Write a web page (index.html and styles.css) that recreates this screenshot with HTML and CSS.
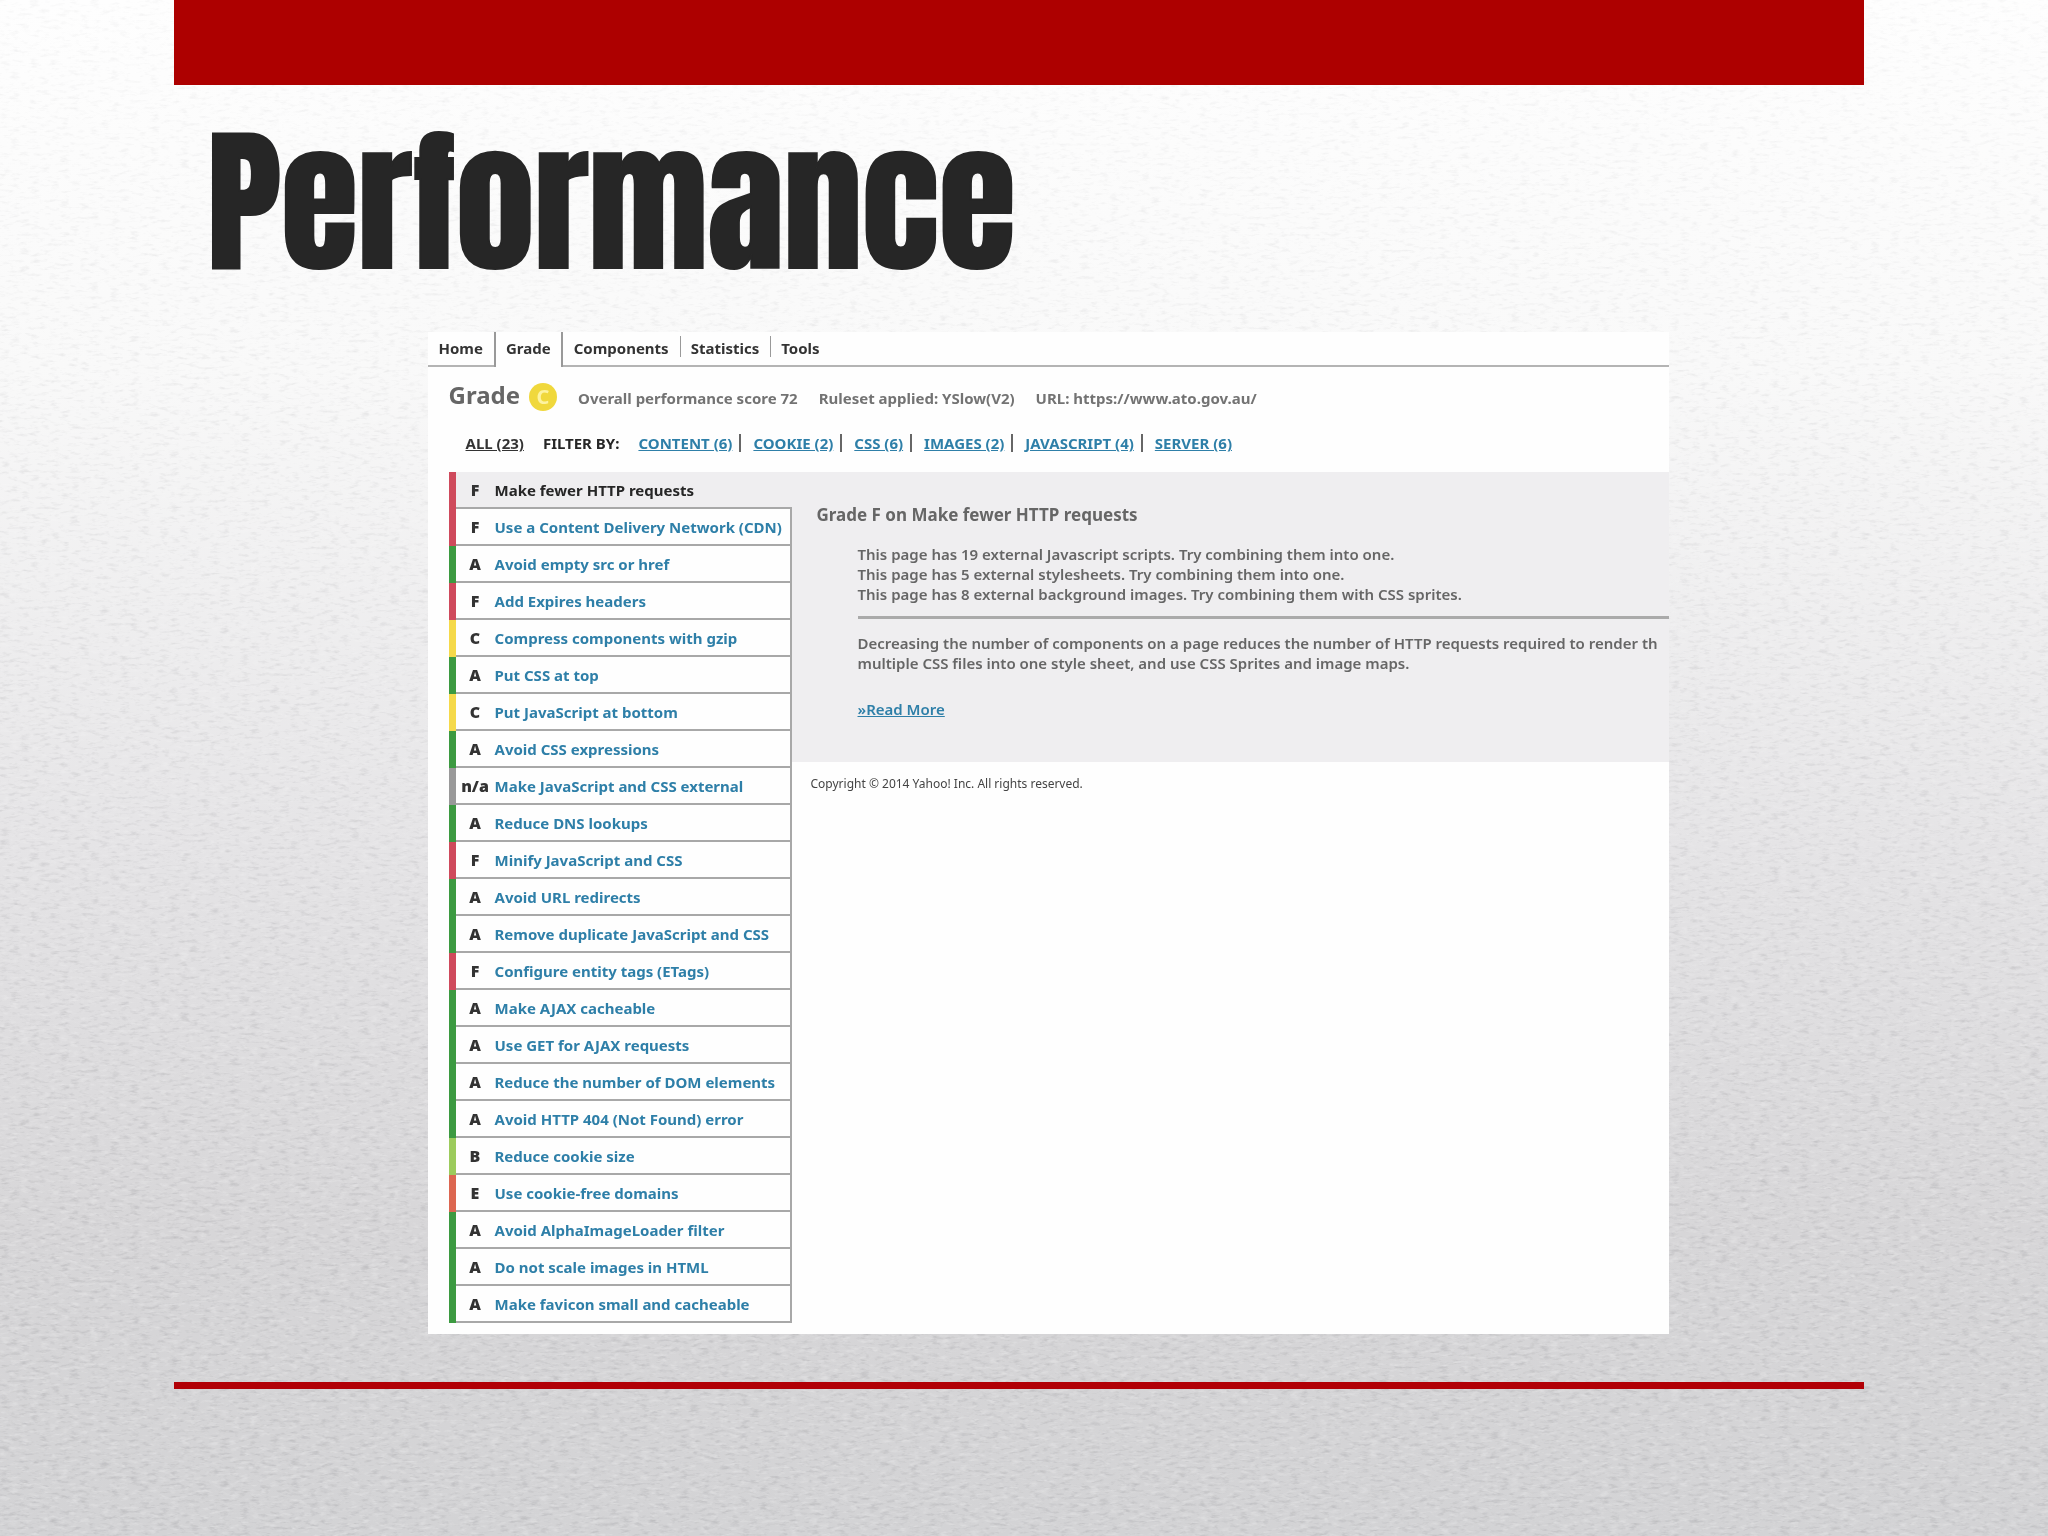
FILE: index.html
```html
<!DOCTYPE html>
<html lang="en">
<head>
<meta charset="utf-8">
<title>Performance</title>
<link rel="stylesheet" href="styles.css">
</head>
<body>
<svg class="paper" aria-hidden="true">
  <filter id="shade" x="0" y="0" width="100%" height="100%" color-interpolation-filters="sRGB">
    <feTurbulence type="fractalNoise" baseFrequency="0.1 0.3" numOctaves="3" seed="4"/>
    <feColorMatrix values="0 0 0 0 0.4  0 0 0 0 0.4  0 0 0 0 0.42  2 0 0 0 -1"/>
  </filter>
  <filter id="light" x="0" y="0" width="100%" height="100%" color-interpolation-filters="sRGB">
    <feTurbulence type="fractalNoise" baseFrequency="0.1 0.3" numOctaves="3" seed="9"/>
    <feColorMatrix values="0 0 0 0 1  0 0 0 0 1  0 0 0 0 1  3 0 0 0 -1.5"/>
  </filter>
  <rect width="100%" height="100%" filter="url(#shade)"/>
  <rect width="100%" height="100%" filter="url(#light)"/>
</svg>
<main class="slide">
  <div class="banner"></div>
  <h1 class="title">Performance</h1>

  <section class="report">
    <nav class="tabs">
      <a class="tab" href="#home">Home</a>
      <a class="tab tab-active" href="#grade">Grade</a>
      <a class="tab" href="#components">Components</a>
      <a class="tab tab-divided" href="#statistics">Statistics</a>
      <a class="tab tab-divided" href="#tools">Tools</a>
    </nav>

    <header class="summary">
      <h2 class="summary-title">Grade</h2>
      <span class="badge">C</span>
      <span class="fact">Overall performance score 72</span>
      <span class="fact">Ruleset applied: YSlow(V2)</span>
      <span class="fact">URL: https://www.ato.gov.au/</span>
    </header>

    <div class="filters">
      <a class="all" href="#all">ALL (23)</a>
      <span class="filter-label">FILTER BY:</span>
      <ul class="filter-list">
        <li><a href="#content">CONTENT (6)</a></li>
        <li><a href="#cookie">COOKIE (2)</a></li>
        <li><a href="#css">CSS (6)</a></li>
        <li><a href="#images">IMAGES (2)</a></li>
        <li><a href="#javascript">JAVASCRIPT (4)</a></li>
        <li><a href="#server">SERVER (6)</a></li>
      </ul>
    </div>

    <div class="results">
      <ul class="rules">
        <li class="rule grade-f rule-active"><b>F</b><a href="#r1">Make fewer HTTP requests</a></li>
        <li class="rule grade-f"><b>F</b><a href="#r2">Use a Content Delivery Network (CDN)</a></li>
        <li class="rule grade-a"><b>A</b><a href="#r3">Avoid empty src or href</a></li>
        <li class="rule grade-f"><b>F</b><a href="#r4">Add Expires headers</a></li>
        <li class="rule grade-c"><b>C</b><a href="#r5">Compress components with gzip</a></li>
        <li class="rule grade-a"><b>A</b><a href="#r6">Put CSS at top</a></li>
        <li class="rule grade-c"><b>C</b><a href="#r7">Put JavaScript at bottom</a></li>
        <li class="rule grade-a"><b>A</b><a href="#r8">Avoid CSS expressions</a></li>
        <li class="rule grade-na"><b>n/a</b><a href="#r9">Make JavaScript and CSS external</a></li>
        <li class="rule grade-a"><b>A</b><a href="#r10">Reduce DNS lookups</a></li>
        <li class="rule grade-f"><b>F</b><a href="#r11">Minify JavaScript and CSS</a></li>
        <li class="rule grade-a"><b>A</b><a href="#r12">Avoid URL redirects</a></li>
        <li class="rule grade-a"><b>A</b><a href="#r13">Remove duplicate JavaScript and CSS</a></li>
        <li class="rule grade-f"><b>F</b><a href="#r14">Configure entity tags (ETags)</a></li>
        <li class="rule grade-a"><b>A</b><a href="#r15">Make AJAX cacheable</a></li>
        <li class="rule grade-a"><b>A</b><a href="#r16">Use GET for AJAX requests</a></li>
        <li class="rule grade-a"><b>A</b><a href="#r17">Reduce the number of DOM elements</a></li>
        <li class="rule grade-a"><b>A</b><a href="#r18">Avoid HTTP 404 (Not Found) error</a></li>
        <li class="rule grade-b"><b>B</b><a href="#r19">Reduce cookie size</a></li>
        <li class="rule grade-e"><b>E</b><a href="#r20">Use cookie-free domains</a></li>
        <li class="rule grade-a"><b>A</b><a href="#r21">Avoid AlphaImageLoader filter</a></li>
        <li class="rule grade-a"><b>A</b><a href="#r22">Do not scale images in HTML</a></li>
        <li class="rule grade-a"><b>A</b><a href="#r23">Make favicon small and cacheable</a></li>
      </ul>
      <div class="detail">
        <article class="panel">
          <h3 class="panel-title">Grade F on Make fewer HTTP requests</h3>
          <div class="panel-body">
            <p>This page has 19 external Javascript scripts. Try combining them into one.<br>
            This page has 5 external stylesheets. Try combining them into one.<br>
            This page has 8 external background images. Try combining them with CSS sprites.</p>
            <hr>
            <p>Decreasing the number of components on a page reduces the number of HTTP requests required to render th<br>
            multiple CSS files into one style sheet, and use CSS Sprites and image maps.</p>
            <a class="more" href="#more">»Read More</a>
          </div>
        </article>
        <p class="copyright">Copyright © 2014 Yahoo! Inc. All rights reserved.</p>
      </div>
    </div>
  </section>

  <div class="footline"></div>
</main>
</body>
</html>
```
FILE: styles.css
```css
* {
  box-sizing: border-box;
}

body {
  margin: 0;
  min-height: 100vh;
  background: linear-gradient(#fefefe 0%, #f9f9f9 24%, #e5e4e6 55%, #d7d6d8 80%, #d3d3d5 100%);
  color: #262626;
  font: bold 15px/20px "Noto Sans", "Open Sans", sans-serif;
}

h1, h2, h3, p, ul {
  margin: 0;
  padding: 0;
}

ul {
  list-style: none;
}

.paper {
  position: fixed;
  inset: 0;
  width: 100%;
  height: 100%;
  opacity: 0.22;
  mask-image: linear-gradient(rgb(0 0 0 / 0.35), #000 80%);
}

.slide {
  position: relative;
  padding: 0 9% 0 8.5%;
}

.banner {
  height: 85px;
  background: #ad0000;
}

.title {
  padding: 0 0 14px 33px;
  font: 400 157px/233px Anton, Impact, "Roboto Condensed", sans-serif;
  -webkit-text-stroke: 2px #262626;
}

.report {
  width: 73.5%;
  margin-left: 15%;
  padding-bottom: 11px;
  overflow: hidden;
  background: #fefefe;
  white-space: nowrap;
}

.tabs {
  display: flex;
  height: 35px;
}

.tabs::after {
  content: "";
  flex: 1;
  border-bottom: 2px solid #b4b4b4;
}

.tab {
  padding: 6px 11px;
  border-bottom: 2px solid #b4b4b4;
  color: #333;
  text-decoration: none;
}

.tab-active {
  padding: 6px 10px;
  border: solid #999;
  border-width: 0 2px;
}

.tab-divided {
  background: linear-gradient(#999, #999) 0 4px / 1px 21px no-repeat;
}

.summary {
  display: flex;
  align-items: baseline;
  padding: 10px 0 0 21px;
  color: #737373;
}

.summary-title {
  color: #666;
  font-size: 24px;
  line-height: 36px;
}

.badge {
  width: 28px;
  height: 28px;
  margin-left: 9px;
  border-radius: 50%;
  background: #f0d83c;
  color: #fdf3a0;
  font-size: 20px;
  line-height: 28px;
  text-align: center;
}

.fact {
  margin-left: 21px;
}

.filters {
  display: flex;
  padding: 20px 0 19px 38px;
}

.all {
  color: #333;
}

.filter-label {
  margin: 0 19px;
}

.filter-list {
  display: flex;
}

.filter-list li + li {
  margin-left: 7px;
  padding-left: 14px;
  background: linear-gradient(#666, #666) 0 1px / 2px 18px no-repeat;
}

.filter-list a,
.rule a,
.more {
  color: #2e7fa8;
}

.results {
  display: flex;
  padding-left: 21px;
}

.rules {
  flex: none;
  width: 343px;
}

.rule {
  display: flex;
  align-items: center;
  height: 37px;
  padding-bottom: 1px;
  border-left: 7px solid;
  box-shadow: inset -2px -2px #a8a8a8;
}

.rule b {
  width: 39px;
  text-align: center;
  color: #333;
  font-size: 16px;
}

.rule a {
  text-decoration: none;
}

.rule-active {
  background: #efeef0;
  box-shadow: inset 0 -2px #a8a8a8;
}

.rule-active a {
  color: #262626;
}

.grade-a { border-color: #3c9a41; }
.grade-b { border-color: #9ccb5c; }
.grade-c { border-color: #f5d94a; }
.grade-e { border-color: #dc6650; }
.grade-f { border-color: #cf4a5c; }
.grade-na { border-color: #999; }

.detail {
  flex: 1;
  min-width: 0;
}

.panel {
  padding: 33px 0 43px 25px;
  background: #efeef0;
  color: #666;
}

.panel-title {
  font-size: 17px;
  line-height: 20px;
}

.panel-body {
  padding: 19px 0 0 41px;
  font-weight: 600;
}

.panel hr {
  height: 3px;
  margin: 12px 0 14px;
  border: 0;
  background: #aaa;
}

.more {
  display: inline-block;
  margin-top: 26px;
}

.copyright {
  padding: 12px 0 0 19px;
  color: #444;
  font-size: 12px;
  font-weight: 400;
}

.footline {
  height: 7px;
  margin: 48px 0 140px;
  background: #b10006;
}
```
